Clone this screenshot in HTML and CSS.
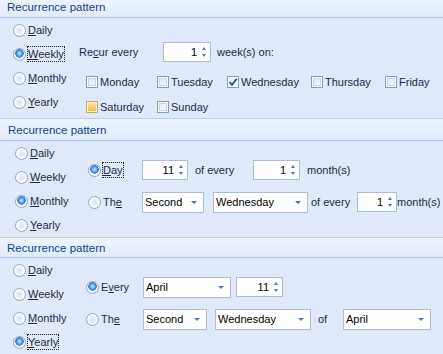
FILE: index.html
```html
<!DOCTYPE html>
<html lang="en">
<head>
  <meta charset="UTF-8">
  <title>Recurrence pattern</title>
  <link rel="stylesheet" href="styles.css">
</head>
<body>
  <div class="page">

    <!-- weekly -->
    <section class="group group-weekly">
      <div class="group-head">Recurrence pattern</div>
      <div class="group-body">
        <div class="kinds">
          <div class="radio"><span class="dot"></span><span class="text"><u>D</u>aily</span></div>
          <div class="radio"><span class="dot on"></span><span class="text focus"><u>W</u>eekly</span></div>
          <div class="radio"><span class="dot"></span><span class="text"><u>M</u>onthly</span></div>
          <div class="radio"><span class="dot"></span><span class="text"><u>Y</u>early</span></div>
        </div>
        <div class="detail">
          <div class="line">
            <span class="caption recur">Re<u>c</u>ur every</span>
            <span class="spin spin-week"><span class="val">1</span><span class="arrows"></span></span>
            <span class="caption weeks">week(s) on:</span>
          </div>
          <div class="days">
            <div class="check"><span class="box"></span>Monday</div>
            <div class="check"><span class="box"></span>Tuesday</div>
            <div class="check"><span class="box checked"><svg width="10" height="10" viewBox="0 0 10 10"><path d="M1.5 5 L4 7.8 L8.8 1.8" fill="none" stroke="#2b4a8a" stroke-width="1.8"/></svg></span>Wednesday</div>
            <div class="check"><span class="box"></span>Thursday</div>
            <div class="check"><span class="box"></span>Friday</div>
            <div class="check"><span class="box hot"></span>Saturday</div>
            <div class="check"><span class="box"></span>Sunday</div>
          </div>
        </div>
      </div>
    </section>

    <!-- monthly -->
    <section class="group group-monthly">
      <div class="group-head">Recurrence pattern</div>
      <div class="group-body">
        <div class="kinds">
          <div class="radio"><span class="dot"></span><span class="text"><u>D</u>aily</span></div>
          <div class="radio"><span class="dot"></span><span class="text"><u>W</u>eekly</span></div>
          <div class="radio"><span class="dot on"></span><span class="text"><u>M</u>onthly</span></div>
          <div class="radio"><span class="dot"></span><span class="text"><u>Y</u>early</span></div>
        </div>
        <div class="detail">
          <div class="line">
            <div class="radio option"><span class="dot on"></span><span class="text focus"><u>D</u>ay</span></div>
            <span class="spin spin-day"><span class="val">11</span><span class="arrows"></span></span>
            <span class="caption every">of every</span>
            <span class="spin spin-month"><span class="val">1</span><span class="arrows"></span></span>
            <span class="caption months">month(s)</span>
          </div>
          <div class="line">
            <div class="radio option"><span class="dot"></span><span class="text">Th<u>e</u></span></div>
            <span class="combo combo-order">Second<span class="drop"></span></span>
            <span class="combo combo-weekday">Wednesday<span class="drop"></span></span>
            <span class="caption every-short">of every</span>
            <span class="spin spin-small"><span class="val">1</span><span class="arrows"></span></span>
            <span class="caption">month(s)</span>
          </div>
        </div>
      </div>
    </section>

    <!-- yearly -->
    <section class="group group-yearly">
      <div class="group-head">Recurrence pattern</div>
      <div class="group-body">
        <div class="kinds">
          <div class="radio"><span class="dot"></span><span class="text"><u>D</u>aily</span></div>
          <div class="radio"><span class="dot"></span><span class="text"><u>W</u>eekly</span></div>
          <div class="radio"><span class="dot"></span><span class="text"><u>M</u>onthly</span></div>
          <div class="radio"><span class="dot on"></span><span class="text focus"><u>Y</u>early</span></div>
        </div>
        <div class="detail">
          <div class="line">
            <div class="radio option"><span class="dot on"></span><span class="text">E<u>v</u>ery</span></div>
            <span class="combo combo-month">April<span class="drop"></span></span>
            <span class="spin spin-date"><span class="val">11</span><span class="arrows"></span></span>
          </div>
          <div class="line">
            <div class="radio option"><span class="dot"></span><span class="text">Th<u>e</u></span></div>
            <span class="combo combo-order2">Second<span class="drop"></span></span>
            <span class="combo combo-weekday2">Wednesday<span class="drop"></span></span>
            <span class="caption of">of</span>
            <span class="combo combo-month">April<span class="drop"></span></span>
          </div>
        </div>
      </div>
    </section>

  </div>
</body>
</html>
```

FILE: styles.css
```css
body {
  margin: 0;
  padding: 0;
  background: #dfe9f9;
  font-family: "Liberation Sans", Arial, sans-serif;
  font-size: 11px;
  color: #1c2b4a;
  overflow: hidden;
}
.page {
  margin-top: -4px;
}
.group {
  border-top: 1px solid #bcd0ec;
}
.group-head {
  height: 20px;
  display: flex;
  align-items: center;
  padding-left: 7px;
  color: #15428b;
  font-size: 11.5px;
  background: linear-gradient(#edf4fe, #e1ebfa);
  border-bottom: 1px solid #a9c4e8;
}
.group-monthly .group-head {
  height: 21px;
  padding-left: 8px;
}
.group-yearly .group-head {
  height: 19px;
}
.group-body {
  display: flex;
}
.group-weekly .group-body {
  height: 100px;
}
.group-monthly .group-body {
  height: 96px;
}
.group-yearly .group-body {
  height: 96px;
}
.kinds {
  width: 79px;
  box-sizing: border-box;
  padding-left: 13px;
  display: flex;
  flex-direction: column;
}
.group-monthly .kinds {
  padding-left: 15px;
}
.kinds .radio {
  height: 24px;
}
.radio {
  display: flex;
  align-items: center;
  gap: 1px;
}
.dot {
  flex: none;
  width: 13px;
  height: 13px;
  box-sizing: border-box;
  border-radius: 50%;
  border: 1px solid #93a9c9;
  background: radial-gradient(circle, #d8e1ee 0, #e4ebf5 2.5px, #ffffff 4.5px, #eef3f9 5.5px);
}
.dot.on {
  background: radial-gradient(circle at 50% 40%, #c9e7ff 0, #6fb4f2 2px, #2f7fd6 3.6px, #3b7ccc 4px, #ffffff 4.6px, #eef3f9 5.5px);
}
.text {
  padding: 1px 1px;
  line-height: 14px;
  white-space: nowrap;
}
.focus {
  outline: 1px dotted #222;
  outline-offset: -1px;
}
.detail {
  display: flex;
  flex-direction: column;
}
.line {
  display: flex;
  align-items: center;
  white-space: nowrap;
}
.group-weekly .detail {
  padding-top: 23px;
}
.group-weekly .line {
  height: 21px;
}
.recur {
  width: 84px;
}
.weeks {
  margin-left: 6px;
}
.days {
  margin-top: 10px;
  margin-left: 7px;
  display: grid;
  grid-template-columns: 71px 70px 84px 74px auto;
  grid-auto-rows: 20px;
  row-gap: 5px;
}
.check {
  display: flex;
  align-items: center;
  gap: 2px;
  white-space: nowrap;
}
.box {
  flex: none;
  width: 12px;
  height: 12px;
  box-sizing: border-box;
  border: 1px solid #7d9ed3;
  background: linear-gradient(135deg, #dbe6f6, #f8fbff);
  box-shadow: inset 0 0 0 1px #ffffff, inset 0 0 0 2px #c3d4ee;
  display: flex;
  align-items: center;
  justify-content: center;
}
.box.checked {
  background: #eef3fb;
  box-shadow: inset 0 0 0 1px #ffffff;
}
.box.hot {
  border-color: #c9a867;
  background: linear-gradient(#fde9a8, #f7b24a);
  box-shadow: inset 0 0 0 1px #fff3cf;
}
.group-monthly .detail,
.group-yearly .detail {
  padding-top: 19px;
  gap: 12px;
}
.group-monthly .detail {
  padding-left: 9px;
}
.group-yearly .detail {
  padding-left: 7px;
}
.group-monthly .line,
.group-yearly .line {
  height: 20px;
}
.option {
  width: 54px;
}
.group-yearly .option {
  width: 57px;
}
.spin,
.combo {
  flex: none;
  display: flex;
  align-items: center;
  height: 20px;
  box-sizing: border-box;
  background: #ffffff;
  border: 1px solid #a8bedc;
  color: #000000;
}
.combo {
  height: 21px;
  padding-left: 2px;
}
.spin {
  justify-content: flex-end;
  padding-right: 4px;
}
.spin .val {
  margin-right: 5px;
}
.arrows {
  display: flex;
  flex-direction: column;
  gap: 4px;
}
.arrows::before,
.arrows::after {
  content: "";
  width: 0;
  height: 0;
  border-left: 2.5px solid transparent;
  border-right: 2.5px solid transparent;
}
.arrows::before {
  border-bottom: 3px solid #4d74b3;
}
.arrows::after {
  border-top: 3px solid #4d74b3;
}
.drop {
  margin-left: auto;
  margin-right: 6px;
  width: 0;
  height: 0;
  border-left: 3px solid transparent;
  border-right: 3px solid transparent;
  border-top: 3px solid #4d74b3;
}
.spin-week { width: 48px; }
.spin-day { width: 46px; }
.spin-month { width: 47px; }
.spin-small { width: 40px; }
.spin-date { width: 47px; margin-left: 5px; }
.every {
  width: 65px;
  box-sizing: border-box;
  padding-left: 7px;
}
.months {
  margin-left: 7px;
}
.combo-order { width: 62px; }
.combo-weekday { width: 95px; margin-left: 9px; }
.every-short {
  width: 49px;
  box-sizing: border-box;
  padding-left: 3px;
}
.combo-month { width: 88px; }
.combo-order2 { width: 64px; }
.combo-weekday2 { width: 96px; margin-left: 8px; }
.of {
  width: 32px;
  box-sizing: border-box;
  padding-left: 7px;
}
```
